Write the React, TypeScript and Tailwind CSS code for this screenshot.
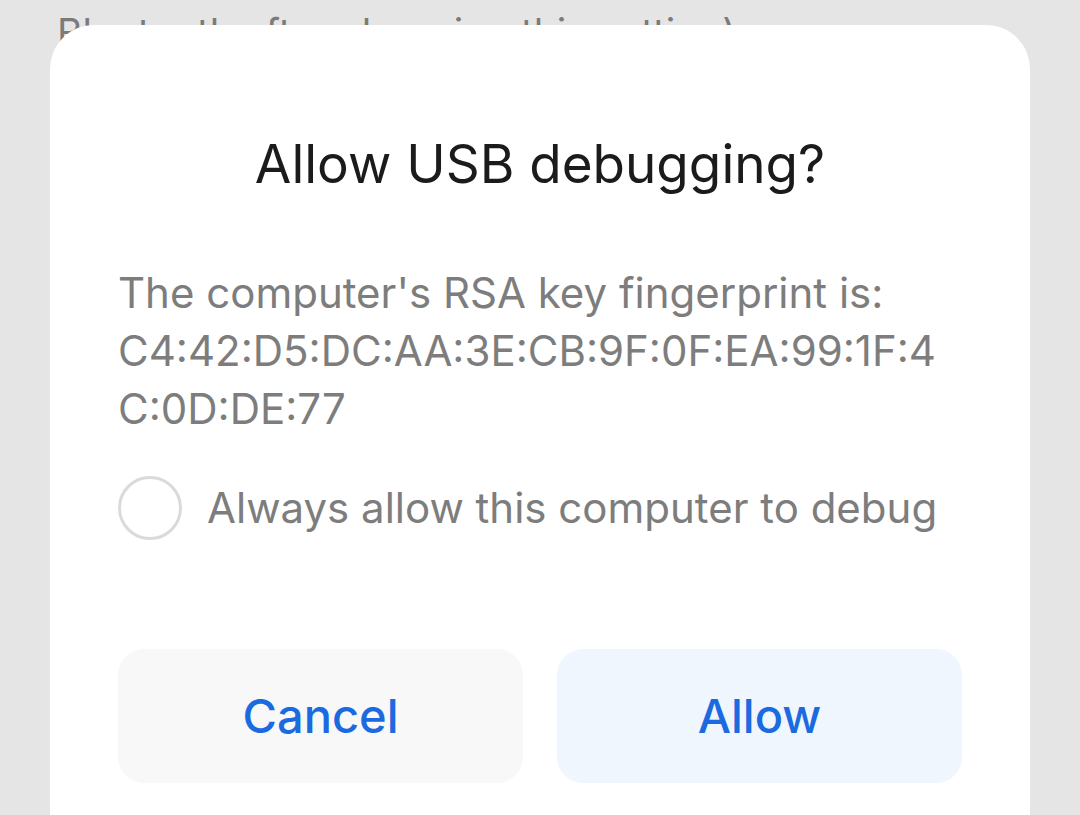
import React from 'react';

const font = { fontFamily: 'Inter, "Noto Sans", sans-serif' };

const UsbDebugDialog: React.FC = () => {
    return (
        <div className="relative mx-[50px] flex flex-1 flex-col rounded-t-[44px] bg-white px-[68px] pt-[113px]">
            <h1 className="text-center text-[53px] leading-[53px] font-normal text-[#1b1b1b]">
                Allow USB debugging?
            </h1>

            <p className="mt-[73px] text-[42px] leading-[58px] text-[#7d7d7d]">
                The computer's RSA key fingerprint is:
                <br />
                C4:42:D5:DC:AA:3E:CB:9F:0F:EA:99:1F:4
                <br />
                C:0D:DE:77
            </p>

            <label className="mt-[38px] flex items-center gap-[25px]">
                <span className="h-[64px] w-[64px] shrink-0 rounded-full border-[3px] border-[#dadada]" />
                <span className="text-[42px] leading-[58px] text-[#7d7d7d]">
                    Always allow this computer to debug
                </span>
            </label>

            <div className="mt-[109px] flex gap-[34px]">
                <button className="flex h-[134px] flex-1 items-center justify-center rounded-[26px] bg-[#f8f8f8] text-[47px] font-medium text-[#1c6ae0]">
                    Cancel
                </button>
                <button className="flex h-[134px] flex-1 items-center justify-center rounded-[26px] bg-[#f0f6fe] text-[47px] font-medium text-[#1c6ae0]">
                    Allow
                </button>
            </div>
        </div>
    );
};

export default function App() {
    return (
        <div className="flex h-[815px] w-[1080px] flex-col overflow-hidden bg-[#e5e5e5]" style={font}>
            <div className="h-[25px] shrink-0">
                <p className="pl-[57px] pt-[10px] text-[39px] leading-[46px] whitespace-nowrap text-[#7b7b7b]">
                    Bluetooth after changing this setting)
                </p>
            </div>
            <UsbDebugDialog />
        </div>
    );
}
